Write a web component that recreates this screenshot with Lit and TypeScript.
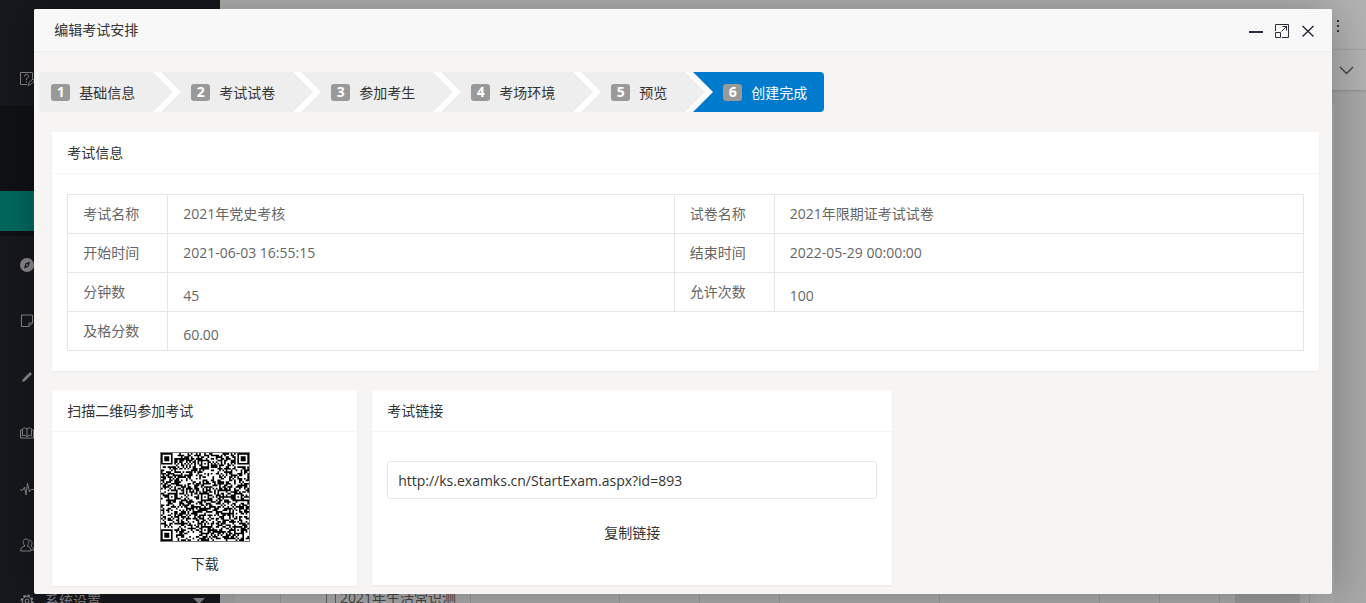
import { LitElement, html, css, svg } from "lit";
import { customElement } from "lit/decorators.js";
import { classMap } from "lit/directives/class-map.js";

const FONT = css`"Open Sans", "Noto Sans CJK SC", sans-serif`;

@customElement("qr-code")
class QrCode extends LitElement {
  static styles = css`
    :host { display: block; }
    svg { display: block; width: 90px; height: 90px; }
  `;

  private cells(): string {
    const n = 53;
    const on: boolean[][] = [];
    let seed = 893;
    for (let y = 0; y < n; y++) {
      on.push([]);
      for (let x = 0; x < n; x++) {
        seed = (Math.imul(seed, 1664525) + 1013904223) >>> 0;
        on[y].push(seed / 4294967296 < 0.5);
      }
    }
    for (let i = 0; i < n; i++) {
      on[6][i] = i % 2 === 0;
      on[i][6] = i % 2 === 0;
    }
    const ring = (cx: number, cy: number, size: number, light: number) => {
      for (let y = -size; y <= size; y++)
        for (let x = -size; x <= size; x++) {
          const row = on[cy + y];
          const reach = Math.max(Math.abs(x), Math.abs(y));
          if (row && cx + x >= 0 && cx + x < n) row[cx + x] = !(reach === light || reach === 4);
        }
    };
    for (const [x, y] of [[26, 6], [6, 26], [26, 26], [46, 26], [26, 46], [46, 46]]) ring(x, y, 2, 1);
    for (const [x, y] of [[3, 3], [49, 3], [3, 49]]) ring(x, y, 4, 2);
    let d = "";
    on.forEach((row, y) => row.forEach((v, x) => { if (v) d += `M${x} ${y}h1v1h-1z`; }));
    return d;
  }

  render() {
    return html`<svg viewBox="0 0 90 90" role="img" aria-label="二维码">
      <rect width="90" height="90" fill="#777" />
      <rect x="1" y="1" width="88" height="88" fill="#fff" />
      <g transform="translate(1 1) scale(1.66)"><path d=${this.cells()} fill="#000" /></g>
    </svg>`;
  }
}

@customElement("step-bar")
class StepBar extends LitElement {
  static styles = css`
    :host { display: block; }
    ol { display: flex; margin: 0; padding: 0; list-style: none; height: 40px; }
    li { display: flex; height: 40px; }
    .body { display: flex; align-items: center; gap: 9px; padding: 0 17px 0 10px; background: #eee; color: #333; }
    li:first-child .body { padding-left: 12px; border-radius: 4px 0 0 4px; }
    .current .body { background: #007acc; color: #fff; border-radius: 0 4px 4px 0; }
    .num {
      width: 19px; height: 17px; border-radius: 3px; background: #999; color: #fff;
      font-weight: 700; font-size: 14px; line-height: 16px; text-align: center;
    }
    .text { line-height: 20px; padding-top: 1px; white-space: nowrap; }
    svg { display: block; width: 29px; height: 40px; }
    .before { fill: #eee; }
    .gap { fill: #fff; }
    .after { fill: #eee; }
    .after-current { fill: #007acc; }
  `;

  private steps = ["基础信息", "考试试卷", "参加考生", "考场环境", "预览", "创建完成"];

  render() {
    const last = this.steps.length - 1;
    return html`<ol>
      ${this.steps.map((s, i) => html`<li class=${classMap({ current: i === last })}>
        <div class="body"><span class="num">${i + 1}</span><span class="text">${s}</span></div>
        ${i < last ? html`<svg viewBox="0 0 29 40" aria-hidden="true">
          <rect class="gap" width="29" height="40" />
          <path class="before" d="M0 0H1L21 20L1 40H0z" />
          <path class=${i === last - 1 ? "after-current" : "after"} d="M9 0H29V40H9L29 20z" />
        </svg>` : null}
      </li>`)}
    </ol>`;
  }
}

const icons = [
  svg`<path d="M12.500 8V.500h-12v12H7M4.500 4.500a2 2 0 1 1 3 1.500L6.500 7v1M6.500 9v1.500M8 13.500l1-3 4-3.500 1.500 2-4 3.500z"/>`,
  svg`<circle cx="7" cy="7" r="7" fill="currentColor" stroke="none"/><path d="M10 3.500L8.500 8.500 4 10.500 5.500 5.500z" fill="#16181d" stroke="none"/><circle cx="7" cy="7" r="1" fill="currentColor" stroke="none"/>`,
  svg`<path d="M1.500 1h11v8l-3.500 3.500H1.500zM12.500 9H9v3.500"/>`,
  svg`<path d="M2 12l1-3 7-7 2 2-7 7z" fill="currentColor" stroke="none"/>`,
  svg`<path d="M7 3C6 1.500 3 1.500 2.500 3v7C4 9 6 9 7 11 8 9 10 9 11.500 10V3C11 1.500 8 1.500 7 3v8M2.500 4H.500v8H6l1 .500L8 12h5.500V4h-2"/>`,
  svg`<path d="M0 8h3l1.500-3L6 13 7.500 1l2 9L11 7.500h3"/>`,
  svg`<path d="M5 8C2 5 3 1 6 1s4 4 1 7c3 1 4 2 4 5H.700c0-3 1-4 4.300-5M9 2c3 0 4 3 2 6 2 1 2.500 2 2.500 4H11"/>`,
  svg`<circle cx="7" cy="7" r="5.500" stroke-dasharray="2.300 2" stroke-width="2"/><circle cx="7" cy="7" r="4.500"/><circle cx="7" cy="7" r="2"/>`,
];

@customElement("app-root")
class AppRoot extends LitElement {
  static styles = css`
    :host {
      display: block; position: relative; height: 100vh; overflow: hidden;
      font-family: ${FONT}; font-size: 14px; line-height: 20px; color: #333;
    }
    * { box-sizing: border-box; }
    button { font: inherit; border: 0; background: none; padding: 0; color: inherit; cursor: pointer; }
    a { color: inherit; text-decoration: none; }

    .page { display: flex; height: 100%; background: #a9a9a9; }
    .side { flex: 0 0 220px; background: #16181d; color: #8a8a8c; padding-top: 50px; }
    .item { display: flex; align-items: center; height: 56px; padding: 2px 0 0 20px; gap: 11px; }
    .item svg { width: 14px; height: 14px; fill: none; stroke: currentColor; stroke-width: 1; }
    .item span { line-height: 22px; }
    .caret { margin: 0 15px 0 auto; border: 6px solid transparent; border-top-color: currentColor; border-bottom: 0; }
    .sub { height: 130px; padding-top: 85px; background: #0f1114; }
    .active { height: 40px; background: #00695f; }
    .main { flex: 1; display: flex; flex-direction: column; min-width: 0; }
    .bar { height: 50px; background: #b3b3b3; border-bottom: 1px solid #a7a7a7; display: flex; justify-content: flex-end; align-items: center; padding: 2px 26px 0 0; }
    .tabs { height: 40px; background: #b3b3b3; display: flex; justify-content: flex-end; align-items: center; padding-right: 12px; box-shadow: 0 1px 2px rgba(0, 0, 0, .15); }
    .bar svg, .tabs svg { display: block; }
    .list { flex: 1; margin: 15px 32px 0 15px; background: #b3b3b3; display: flex; align-items: flex-end; min-width: 0; }
    .row { display: flex; height: 18px; width: 100%; padding-right: 24px; background: #aeaeae; }
    .cell { border-right: 1px solid #9b9b9b; height: 18px; }
    .c1 { flex: 0 0 46px; }
    .c2 { flex: 0 0 190px; display: flex; gap: 4px; padding-left: 45px; color: #464646; line-height: 26px; white-space: nowrap; }
    .box { width: 10px; height: 18px; border: 1px solid #666; border-width: 0 1px; }
    .c3 { flex: 1 1 150px; }
    .c4 { flex: 0 0 80px; }
    .c5 { flex: 0 0 160px; }
    .c6 { flex: 0 0 60px; }
    .c7 { flex: 0 0 90px; padding: 0 9px 0 15px; }
    .thumb { height: 18px; background: #9d9d9d; }

    .dialog {
      position: absolute; inset: 0; margin: auto; width: 95%; height: 97%;
      background: #f6f5f3; border-radius: 2px; box-shadow: 1px 1px 50px rgba(0, 0, 0, .3);
      overflow: hidden;
    }
    .title { display: flex; align-items: center; height: 43px; padding: 0 16px 0 20px; background: #f8f8f8; border-bottom: 1px solid #eee; }
    h1, h2 { margin: 0; font-size: 14px; font-weight: 400; line-height: 20px; }
    h1 { flex: 1; }
    .tools { display: flex; gap: 10px; padding-top: 2px; }
    .tools svg { display: block; width: 16px; height: 16px; fill: none; stroke: #2e2d3c; }
    .content { padding: 20px 13px 0 5px; }
    .cards { padding: 20px 0 0 13px; }
    .card { background: #fff; border-radius: 2px; box-shadow: 0 1px 2px rgba(0, 0, 0, .05); }
    .card h2 { height: 42px; padding: 0 15px; line-height: 42px; border-bottom: 1px solid #f6f6f6; }
    .info { padding: 20px 15px; }
    table { width: 100%; border-collapse: collapse; table-layout: fixed; color: #666; }
    th, td { border: 1px solid #e6e6e6; height: 39px; padding: 0 15px; font-weight: 400; text-align: left; line-height: 20px; }
    .low { padding-top: 7px; }
    .k { width: 100px; }
    .v { width: 41%; }
    .pair { display: flex; align-items: flex-start; gap: 15px; margin-top: 19px; }
    .scan { flex: 0 1 305px; }
    .link { flex: 0 1 520px; }
    .code { display: flex; flex-direction: column; align-items: center; gap: 12px; padding: 20px 15px 12px; }
    .share { display: flex; flex-direction: column; align-items: center; gap: 24px; padding: 29px 15px 42px; }
    input { width: 100%; height: 38px; padding: 0 10px; border: 1px solid #e6e6e6; border-radius: 2px; font: inherit; color: #333; background: #fff; }
  `;

  private rows = [
    ["考试名称", "2021年党史考核", "试卷名称", "2021年限期证考试试卷"],
    ["开始时间", "2021-06-03 16:55:15", "结束时间", "2022-05-29 00:00:00"],
    ["分钟数", "45", "允许次数", "100"],
    ["及格分数", "60.00"],
  ];

  private icon(i: number) {
    return html`<svg viewBox="0 0 14 14" aria-hidden="true">${icons[i]}</svg>`;
  }

  render() {
    return html`
      <div class="page">
        <nav class="side">
          <div class="item">${this.icon(0)}</div>
          <div class="sub"><div class="active"></div></div>
          ${[1, 2, 3, 4, 5, 6].map((i) => html`<div class="item">${this.icon(i)}</div>`)}
          <div class="item">${this.icon(7)}<span>系统设置</span><i class="caret"></i></div>
        </nav>
        <div class="main">
          <div class="bar"><svg width="4" height="14" fill="#333" aria-hidden="true"><path d="M1 1h2v2H1zM1 6h2v2H1zM1 11h2v2H1z"/></svg></div>
          <div class="tabs"><svg width="15" height="9" fill="none" stroke="#444" stroke-width="1.3" aria-hidden="true"><path d="M1 1l6.500 6.500L14 1"/></svg></div>
          <div class="list"><div class="row">
            <div class="cell c1"></div>
            <div class="cell c2"><span class="box"></span><span>2021年生活常识测</span></div>
            <div class="cell c3"></div><div class="cell c4"></div><div class="cell c4"></div>
            <div class="cell c5"></div><div class="cell c5"></div><div class="cell c6"></div><div class="cell c6"></div>
            <div class="cell c7"><div class="thumb"></div></div>
          </div></div>
        </div>
      </div>

      <section class="dialog" role="dialog" aria-labelledby="title">
        <header class="title">
          <h1 id="title">编辑考试安排</h1>
          <div class="tools">
            <button aria-label="最小化"><svg viewBox="0 0 16 16"><path d="M1 9h14" stroke-width="2"/></svg></button>
            <button aria-label="最大化"><svg viewBox="0 0 16 16"><path d="M1.500 8V1.500h13v13H8M7.500 8.500l5-5M8.500 3.500h4v4M1.500 9.500h5v5h-5z"/></svg></button>
            <button aria-label="关闭"><svg viewBox="0 0 16 16"><path d="M2.500 3l11 10.500M13.500 3l-11 10.500" stroke-width="1.500"/></svg></button>
          </div>
        </header>
        <div class="content">
          <step-bar></step-bar>
          <div class="cards">
            <section class="card">
              <h2>考试信息</h2>
              <div class="info">
                <table>
                  <colgroup><col class="k" /><col class="v" /><col class="k" /><col /></colgroup>
                  <tbody>
                    ${this.rows.map((r, i) => html`<tr>
                      <th scope="row">${r[0]}</th>
                      <td class=${i > 1 ? "low" : ""} colspan=${r.length === 2 ? 3 : 1}>${r[1]}</td>
                      ${r.length > 2 ? html`<th scope="row">${r[2]}</th><td class=${i > 1 ? "low" : ""}>${r[3]}</td>` : null}
                    </tr>`)}
                  </tbody>
                </table>
              </div>
            </section>
            <div class="pair">
              <section class="card scan">
                <h2>扫描二维码参加考试</h2>
                <div class="code"><qr-code></qr-code><a href="#">下载</a></div>
              </section>
              <section class="card link">
                <h2 id="link-title">考试链接</h2>
                <div class="share">
                  <input type="text" aria-labelledby="link-title" .value=${"http://ks.examks.cn/StartExam.aspx?id=893"} />
                  <button>复制链接</button>
                </div>
              </section>
            </div>
          </div>
        </div>
      </section>
    `;
  }
}
